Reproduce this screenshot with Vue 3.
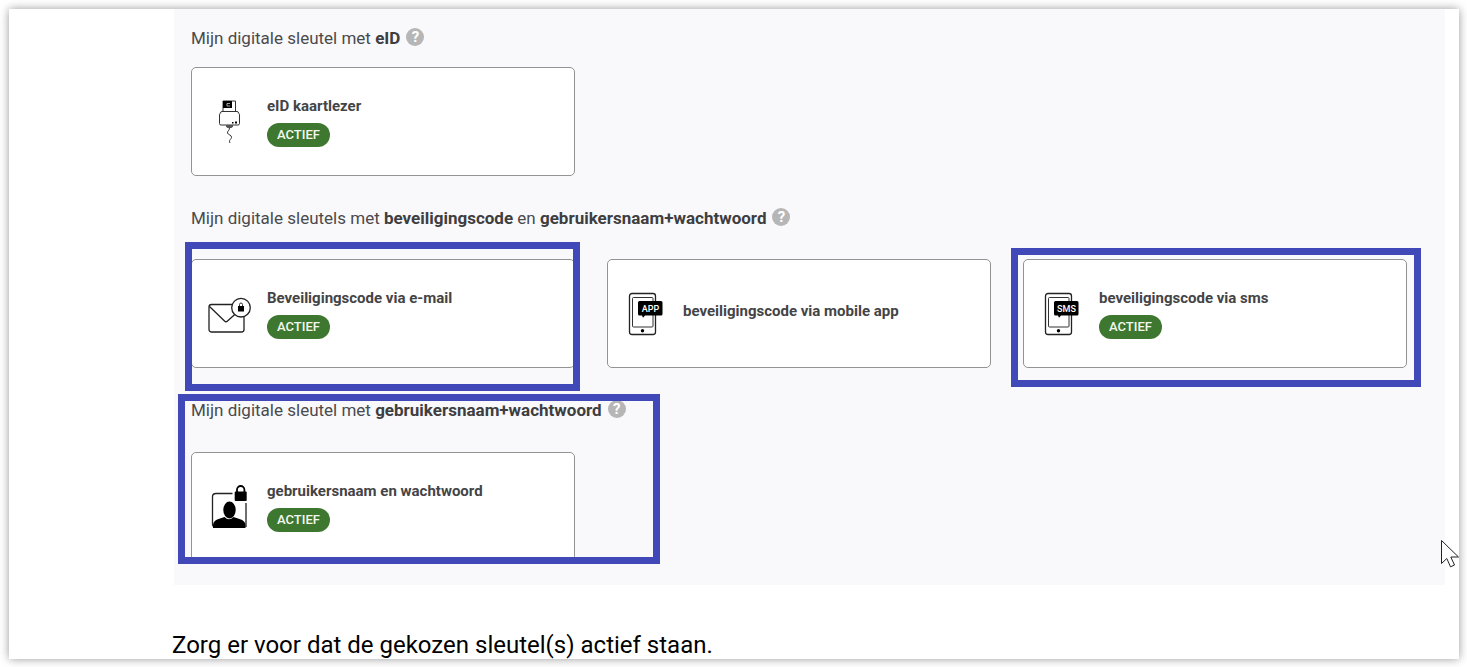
<script setup>
const sections = [
  {
    id: 'eid',
    parts: [{ text: 'Mijn digitale sleutel met ' }, { text: 'eID', strong: true }],
    keys: [{ id: 'reader', title: 'eID kaartlezer', active: true }],
  },
  {
    id: 'code',
    parts: [
      { text: 'Mijn digitale sleutels met ' },
      { text: 'beveiligingscode', strong: true },
      { text: ' en ' },
      { text: 'gebruikersnaam+wachtwoord', strong: true },
    ],
    keys: [
      { id: 'mail', title: 'Beveiligingscode via e-mail', active: true, mark: 'mark-mail' },
      { id: 'app', title: 'beveiligingscode via mobile app', active: false },
      { id: 'sms', title: 'beveiligingscode via sms', active: true, mark: 'mark-sms' },
    ],
  },
  {
    id: 'user',
    parts: [
      { text: 'Mijn digitale sleutel met ' },
      { text: 'gebruikersnaam+wachtwoord', strong: true },
    ],
    keys: [{ id: 'login', title: 'gebruikersnaam en wachtwoord', active: true, mark: 'mark-user' }],
  },
]
</script>

<template>
  <main class="sheet">
    <div class="panel">
      <section v-for="s in sections" :key="s.id" class="group" :class="'group-' + s.id">
        <div class="heading">
          <h2>
            <template v-for="p in s.parts" :key="p.text">
              <strong v-if="p.strong">{{ p.text }}</strong>
              <template v-else>{{ p.text }}</template>
            </template>
          </h2>
          <button class="help" type="button" aria-label="Help">?</button>
        </div>
        <div class="cards">
          <article v-for="k in s.keys" :key="k.id" class="card">
            <svg v-if="k.id === 'reader'" class="icon" viewBox="0 0 44 44" aria-hidden="true">
              <path d="M15 11V1h12.500v10" class="thin" />
              <path d="M15 1h9v7h-9z" />
              <path d="M19 3.500h3M19 3.500v2.500h3" stroke="#aaa" fill="none" />
              <path d="M14 11.500h15q1.500 0 1.500 1.500 1.500 1 1 3v7.500q0 1.500-1.500 1.500H13q-1.500 0-1.500-1.500V16q-.5-2 1-3 0-1.500 1.500-1.500z" class="thin" />
              <path d="M24 22h1.500v1.500H24zM27 21.500h2v2h-2z" />
              <path d="M18 25h7v1.500l-1.500 1.500h-4L18 26.500z" fill="#555" />
              <path d="M21.500 28c0 3-2.500 3-2 5s4.500 2 4 4.500-3 2-1.500 5.500" class="thin" />
            </svg>
            <svg v-else-if="k.id === 'mail'" class="icon" viewBox="0 0 44 44" aria-hidden="true">
              <rect x="1" y="12.500" width="35" height="27.500" rx="2.500" class="line" />
              <path d="M1.500 14.500L16.500 29q1.500 1.500 3 0l9-8" class="line" />
              <circle cx="33" cy="15.700" r="9.300" class="line white" />
              <rect x="30" y="14" width="6" height="5.500" />
              <path d="M31.500 14v-1.500a1.500 1.500 0 0 1 3 0V14" class="thin" />
            </svg>
            <svg v-else-if="k.id === 'login'" class="icon" viewBox="0 0 44 44" aria-hidden="true">
              <path d="M24.500 8.500H8q-3.500 0-3.500 3.500v27q0 3 3 3M38 18v24" class="line" />
              <path d="M5 43v-2.500q0-5 5.500-6.500l6-2q4.500 4.500 9 0l6 2q6 1.500 6 6.500v2.500z" />
              <ellipse cx="21.500" cy="25" rx="6.200" ry="8.500" />
              <rect x="26.700" y="6.500" width="12" height="9.500" rx="1" />
              <path d="M29 7V4.700a3.700 3.700 0 0 1 7.400 0V7" class="line bold" />
            </svg>
            <svg v-else class="icon" viewBox="0 0 44 44" aria-hidden="true">
              <rect x="5.500" y="1.500" width="26" height="41" rx="2.500" class="line" />
              <rect x="8.500" y="5.500" width="20.500" height="29.500" rx="1" class="thin" />
              <circle cx="18.500" cy="38.700" r="1.700" />
              <path d="M15.500 9h21.500q1.500 0 1.500 1.500v11.500q0 1.500-1.500 1.500H21l-2 2.200-1-2.200h-2.500q-1.500 0-1.500-1.500V10.500q0-1.500 1.500-1.500z" />
              <text x="26.500" y="19.500" text-anchor="middle" class="bubble">{{ k.id === 'app' ? 'APP' : 'SMS' }}</text>
            </svg>
            <div class="info">
              <h3>{{ k.title }}</h3>
              <span v-if="k.active" class="badge">ACTIEF</span>
            </div>
            <span v-if="k.mark" class="mark" :class="k.mark"></span>
          </article>
        </div>
      </section>
    </div>
    <p class="note">Zorg er voor dat de gekozen sleutel(s) actief staan.</p>
    <svg class="cursor" viewBox="0 0 19 28" aria-hidden="true">
      <path d="M1.500.5v23l5.300-5 3.700 8.300 4-1.800-3.700-8h7.700z" />
    </svg>
  </main>
</template>

<style>
body {
  background: #fff;
}
</style>

<style scoped>
.sheet {
  position: relative;
  margin: 9px 8px 8px 9px;
  background: #fff;
  box-shadow: 0 0 9px rgba(0, 0, 0, 0.4);
  font-family: Roboto, "Liberation Sans", sans-serif;
  display: flow-root;
}
.panel {
  margin: 0 14px 0 165px;
  padding: 17px 38px 24px 17px;
  background: #f9f9fc;
  display: flex;
  flex-direction: column;
  gap: 30px;
}
.group {
  display: flex;
  flex-direction: column;
  gap: 29px;
}
.group-eid {
  gap: 17px;
}
.group-user {
  gap: 30px;
}
.heading {
  display: flex;
  align-items: center;
  gap: 6px;
  height: 24px;
}
h2 {
  margin: 0;
  font-size: 17px;
  line-height: 24px;
  font-weight: 400;
  color: #4a4a4c;
  white-space: pre-wrap;
}
h2 strong {
  font-weight: 700;
  color: #3e3e40;
}
.help {
  width: 18px;
  height: 18px;
  margin: 0 0 2px;
  padding: 0;
  border: 0;
  border-radius: 50%;
  background: #b6b6b6;
  color: #fff;
  font: 700 15px/18px Roboto, sans-serif;
  text-align: center;
}
.cards {
  display: grid;
  grid-template-columns: repeat(3, 1fr);
  gap: 32px;
}
.card {
  position: relative;
  box-sizing: border-box;
  min-height: 109px;
  padding: 0 16px;
  display: flex;
  align-items: center;
  gap: 15px;
  border: 1px solid #939393;
  border-radius: 5px;
  background: #fff;
}
.icon {
  width: 44px;
  height: 44px;
  flex: none;
  overflow: visible;
}
.line {
  fill: none;
  stroke: #222;
  stroke-width: 1.3;
}
.bold {
  stroke: #000;
  stroke-width: 1.8;
}
.thin {
  fill: none;
  stroke: #333;
  stroke-width: 1;
}
.white {
  fill: #fff;
}
.bubble {
  fill: #fff;
  font-size: 9px;
  font-weight: 500;
}
.info {
  display: flex;
  flex-direction: column;
  align-items: flex-start;
  gap: 7px;
}
.info:not(:has(.badge)) {
  padding-bottom: 5px;
}
h3 {
  margin: 0;
  font-size: 15px;
  line-height: 20px;
  font-weight: 700;
  color: #444446;
}
.badge {
  padding: 0 10px;
  border-radius: 12px;
  background: #3d7730;
  color: #f4f8f0;
  font-size: 13px;
  line-height: 24px;
  font-weight: 500;
}
.mark {
  position: absolute;
  border: 7px solid #4149b8;
  pointer-events: none;
}
.mark-mail {
  inset: -18px -6px -24px -7px;
}
.mark-sms {
  inset: -12px -15px -20px -13px;
}
.mark-user {
  inset: -59px -86px -4px -14px;
}
.note {
  margin: 46px 0 0 163px;
  font-size: 24px;
  line-height: 28px;
  color: #000;
}
.cursor {
  position: absolute;
  right: 0;
  bottom: 91px;
  width: 19px;
  height: 28px;
  fill: #fff;
  stroke: #222;
}
</style>
